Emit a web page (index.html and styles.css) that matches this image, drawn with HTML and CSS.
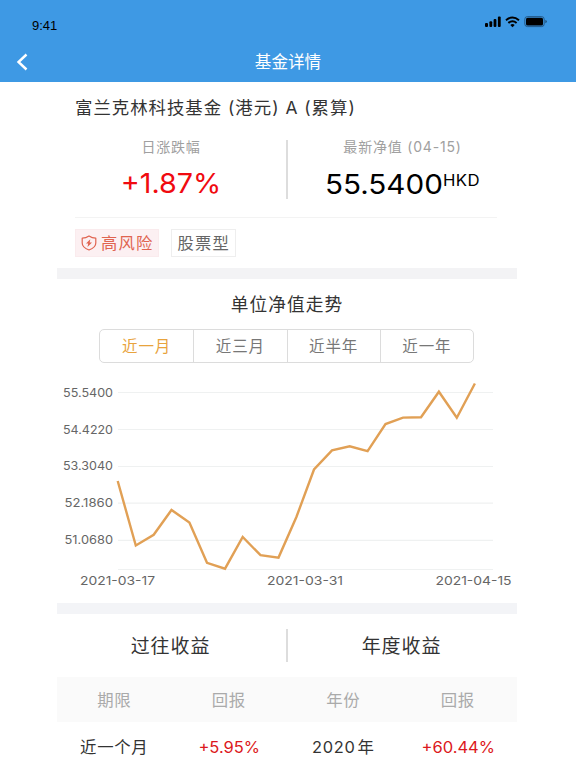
FILE: index.html
```html
<!DOCTYPE html>
<html lang="zh-CN">
<head>
<meta charset="utf-8">
<title>基金详情</title>
<link rel="stylesheet" href="styles.css">
</head>
<body>
<header class="topbar">
  <div class="status">
    <span class="time">9:41</span>
    <svg class="status-icons" width="64" height="14" viewBox="0 0 64 14">
      <rect x="1" y="9" width="3" height="4" rx="1"/>
      <rect x="5.4" y="7.2" width="2.8" height="5.8" rx="1"/>
      <rect x="9.6" y="5" width="2.8" height="8" rx="1"/>
      <rect x="13.9" y="2.6" width="2.8" height="10.4" rx="1"/>
      <g fill="none" stroke="#000" stroke-width="2">
        <path d="M22 6.2Q28.5 .8 35 6.2"/>
        <path d="M24.4 9Q28.5 5.6 32.6 9"/>
      </g>
      <path d="M26.3 10.9Q28.5 9.1 30.7 10.9L28.5 13.2Z"/>
      <rect x="40.8" y="2.6" width="19.4" height="10" rx="2.6" fill="none" stroke="#1d4a72" stroke-width=".8"/>
      <rect x="42" y="3.8" width="17" height="7.6" rx="1.5"/>
      <path d="M61.4 6.1Q62.8 6.3 62.8 7.6T61.4 9.2Z" fill="#1d4a72"/>
    </svg>
  </div>
  <div class="nav">
    <svg class="back" width="12" height="18" viewBox="0 0 12 18"><path d="M10.5 1.5L2.5 9L10.5 16.5" fill="none" stroke="#fff" stroke-width="2.4"/></svg>
    <h1>基金详情</h1>
  </div>
</header>
<main class="page">
  <section class="summary">
    <h2>富兰克林科技基金 (港元) A (累算)</h2>
    <div class="stats">
      <div class="stat">
        <span class="label">日涨跌幅</span>
        <span class="value up">+1.87%</span>
      </div>
      <div class="stat stat-nav">
        <span class="label">最新净值 (04-15)</span>
        <span class="value">55.5400<span class="unit">HKD</span></span>
      </div>
    </div>
    <div class="tags">
      <span class="tag risk">
        <svg width="16" height="16" viewBox="0 0 16 16"><g fill="none" stroke="#e06450" stroke-width="1.2" stroke-linejoin="round"><path d="M8 1Q11 3.2 14.8 3.2V8Q14.8 12.5 8 15Q1.2 12.5 1.2 8V3.2Q5 3.2 8 1Z"/></g><path d="M9.3 4.2L5 8.6H7.2L6.5 12L11 7.4H8.7Z" fill="#e06450"/></svg>
        <span>高风险</span>
      </span>
      <span class="tag">股票型</span>
    </div>
  </section>
  <section class="trend">
    <h3>单位净值走势</h3>
    <div class="ranges">
      <span class="active">近一月</span><span>近三月</span><span>近半年</span><span>近一年</span>
    </div>
    <svg class="chart" width="460" height="232" viewBox="57 371 460 232">
      <g stroke="#eff1f1" stroke-width="1.2">
        <path d="M118 392.5H493M118 429.5H493M118 466.5H493M118 503.2H493M118 540.3H493M118 569.5H493"/>
      </g>
      <g class="axis-y" text-anchor="end">
        <text x="113" y="396.5" textLength="50" lengthAdjust="spacingAndGlyphs">55.5400</text>
        <text x="113" y="433.5" textLength="50" lengthAdjust="spacingAndGlyphs">54.4220</text>
        <text x="113" y="470.3" textLength="50" lengthAdjust="spacingAndGlyphs">53.3040</text>
        <text x="113" y="507.3" textLength="48.5" lengthAdjust="spacingAndGlyphs">52.1860</text>
        <text x="113" y="544.3" textLength="48.5" lengthAdjust="spacingAndGlyphs">51.0680</text>
      </g>
      <g class="axis-x">
        <text x="80" y="584.5" textLength="75" lengthAdjust="spacingAndGlyphs">2021-03-17</text>
        <text x="267" y="584.5" textLength="76" lengthAdjust="spacingAndGlyphs">2021-03-31</text>
        <text x="435.5" y="584.5" textLength="76" lengthAdjust="spacingAndGlyphs">2021-04-15</text>
      </g>
      <polyline fill="none" stroke="#e1a055" stroke-width="2.4" points="117.7,481 135.8,545.5 153.7,534.8 171.5,510 189.4,522.5 207,562.8 225,568.7 242.7,537 260.5,555.2 278.5,557.6 296.4,517 314,469.5 332,450.4 349.7,446.3 367.6,451.2 385.5,424 403,417.6 421,417.2 438.9,391.7 456.8,417.8 474.9,383.5"/>
    </svg>
  </section>
  <section class="returns">
    <div class="heads">
      <h3>过往收益</h3>
      <h3>年度收益</h3>
    </div>
    <div class="row row-head"><span>期限</span><span>回报</span><span>年份</span><span>回报</span></div>
    <div class="row"><span>近一个月</span><span class="gain">+5.95%</span><span>2020<i class="thin"></i>年</span><span class="gain">+60.44%</span></div>
  </section>
</main>
</body>
</html>
```
FILE: styles.css
```css
* { box-sizing: border-box; }
body {
  margin: 0;
  height: 768px;
  overflow: hidden;
  background: #fff;
  color: #333;
  font-family: Inter, "Noto Sans CJK SC", sans-serif;
}
h1, h2, h3 { margin: 0; font-weight: 400; }
svg { display: block; flex: none; }

.topbar { height: 82px; background: #3e99e4; }
.status {
  height: 42px;
  padding: 14px 28px 0 32px;
  display: flex;
  justify-content: space-between;
}
.time {
  padding-top: 4px;
  color: #000;
  font: 13px/16px "Liberation Sans", sans-serif;
}
.nav {
  height: 40px;
  padding: 0 16px;
  display: grid;
  grid-template-columns: 12px 1fr 12px;
  align-items: center;
}
.nav h1 {
  color: #fff;
  font-size: 16.6px;
  line-height: 40px;
  text-align: center;
}

.page { width: 460px; margin-left: 57px; }
.summary { height: 186px; padding: 13px 20px 0 18px; }
.summary h2 {
  font-size: 17.4px;
  line-height: 26px;
  letter-spacing: 1px;
  white-space: nowrap;
}
.stats {
  height: 97px;
  padding-top: 19px;
  display: grid;
  grid-template-columns: 213px 1fr;
  border-bottom: 1px solid #f3f3f3;
}
.stat { height: 59px; text-align: center; }
.stat:first-child { padding-right: 19px; border-right: 2px solid #ddd; }
.stat-nav { padding-left: 20px; }
.label {
  display: block;
  color: #a0a0a0;
  font-size: 14px;
  line-height: 14px;
  letter-spacing: .8px;
}
.value {
  display: block;
  margin-top: 14px;
  color: #000;
  font-size: 27.6px;
  line-height: 32px;
  white-space: nowrap;
  transform: scaleX(1.075);
}
.up { margin-top: 13px; color: #f00a10; transform: scaleX(1.04); }
.unit { font-size: 15.6px; line-height: 16px; vertical-align: 8px; letter-spacing: .4px; }
.tags { padding-top: 11px; display: flex; gap: 12px; }
.tag {
  height: 28px;
  padding: 0 5px;
  display: flex;
  align-items: center;
  gap: 4px;
  border: 1px solid #eee;
  color: #666;
  font-size: 16.3px;
  letter-spacing: 1.2px;
  line-height: 26px;
}
.risk { background: #fcf0f2; border-color: #faebed; color: #e06450; }

.trend { height: 335px; border-top: 11px solid #f3f3f5; }
.trend h3 {
  padding-top: 13px;
  font-size: 17.7px;
  line-height: 26px;
  letter-spacing: 1.1px;
  text-align: center;
}
.ranges {
  width: 375px;
  height: 34px;
  margin: 11px 0 8px 42px;
  display: grid;
  grid-template-columns: repeat(4, 1fr);
  border: 1.5px solid #dcdcdc;
  border-radius: 5px;
  color: #777;
  font-size: 15.5px;
  line-height: 34px;
  letter-spacing: .9px;
  text-align: center;
}
.ranges span { height: 32px; }
.ranges span + span { border-left: 1px solid #dcdcdc; }
.ranges .active { color: #e8a33d; }
.axis-y { font-size: 11.6px; fill: #666; }
.axis-x { font-size: 12.2px; fill: #666; }

.returns { border-top: 11px solid #f3f4f7; }
.heads {
  height: 63px;
  padding: 15px 0;
  display: grid;
  grid-template-columns: 231px 1fr;
}
.heads h3 {
  padding-right: 2px;
  font-size: 19px;
  line-height: 35px;
  letter-spacing: .9px;
  text-align: center;
  height: 33px;
}
.heads h3:first-child { border-right: 2px solid #ddd; }
.row {
  height: 50px;
  display: grid;
  grid-template-columns: repeat(4, 1fr);
  padding-right: 2px;
  font-size: 16.4px;
  line-height: 51px;
  letter-spacing: .7px;
  text-align: center;
}
.row-head {
  height: 45px;
  background: #fafafa;
  color: #aaa;
  line-height: 47px;
}
.gain { color: #dc1820; letter-spacing: 0; font-size: 15.6px; transform: scaleX(1.06); }
.thin { display: inline-block; width: 2px; }
```
